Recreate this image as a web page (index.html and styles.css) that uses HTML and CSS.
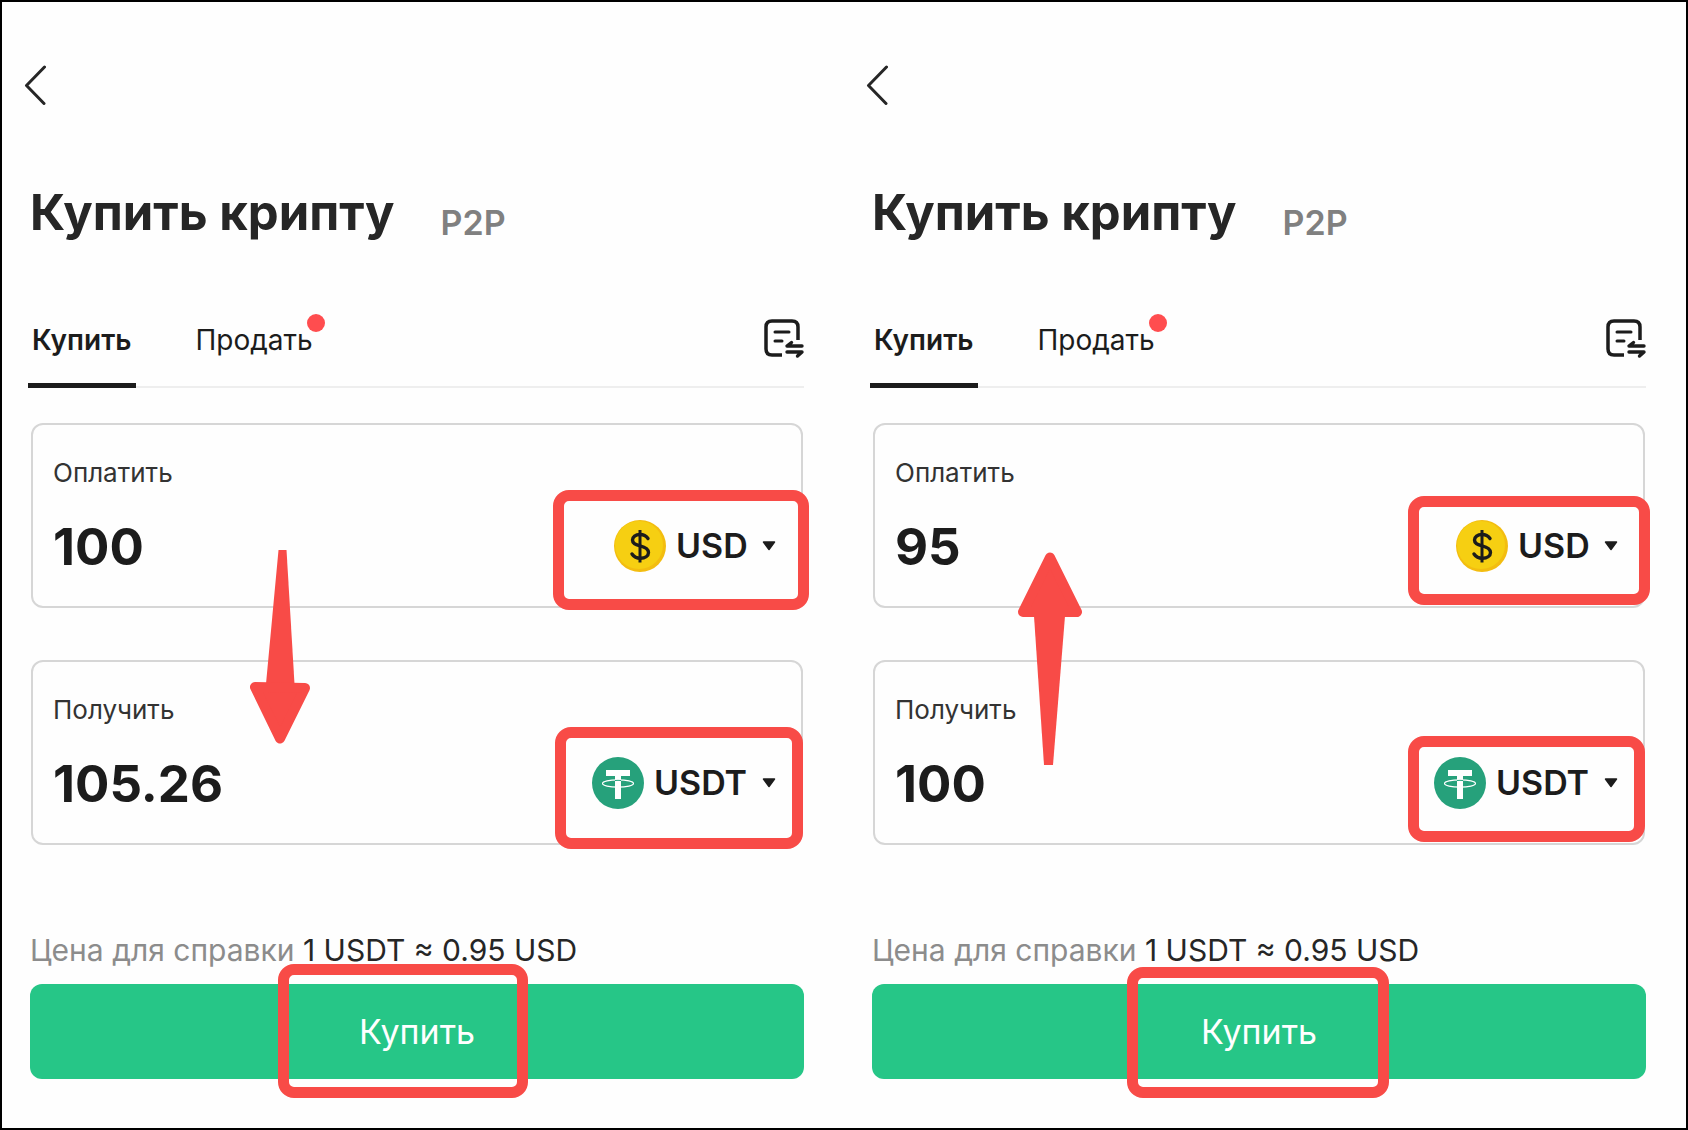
FILE: index.html
```html
<!DOCTYPE html>
<html lang="ru">
<head>
    <meta charset="UTF-8">
    <title>Купить крипту</title>
    <meta name="viewport" content="width=device-width, initial-scale=1.0">
    <link rel="stylesheet" href="styles.css">
</head>
<body>
    <!-- shared icons -->
    <svg class="sprite" aria-hidden="true">
        <symbol id="icon-back" viewBox="0 0 22 40">
            <path d="M20.5 2 L2.5 20.5 L20 38.5" fill="none" stroke="#262626" stroke-width="3" stroke-linecap="round" stroke-linejoin="round"/>
        </symbol>
        <symbol id="icon-orders" viewBox="0 0 42 42">
            <g fill="none" stroke="#1c1c1c" stroke-width="3" stroke-linecap="round" stroke-linejoin="round">
                <path d="M36 22 V9 Q36 3 30 3 H10 Q4 3 4 9 V31 Q4 37 10 37 H20" stroke-linecap="butt" stroke-width="3.500"/>
                <path d="M13 14 H27 M13 23 H20"/>
                <path d="M40 28 H25 L29.500 24.500" stroke-width="3.400"/>
                <path d="M25 34 H40 L35.500 38" stroke-width="3.400"/>
            </g>
        </symbol>
        <symbol id="coin-usd" viewBox="0 0 52 52">
            <circle cx="26" cy="26" r="26" fill="#f3bd10"/>
            <circle cx="25" cy="25" r="24" fill="#f6cf12"/>
            <g fill="none" stroke="#1c1c1c" stroke-linecap="round">
                <path d="M34 18.5 C32 15.500 29 14.500 26 14.500 C21.500 14.500 18.500 17 18.500 20 C18.500 23.500 21.500 24.800 26 25.800 C31 27 34.500 28.600 34.500 32.500 C34.500 36 31 38.300 26.500 38.300 C23 38.300 20 37 18 34" stroke-width="3.400"/>
                <path d="M26 10 V42.500" stroke-width="3" stroke-linecap="butt"/>
            </g>
        </symbol>
        <symbol id="coin-usdt" viewBox="0 0 52 52">
            <circle cx="26" cy="26" r="26" fill="#26a17b"/>
            <path d="M14 13 H38 V19 H29 V42 H23 V19 H14 Z" fill="#fff"/>
            <ellipse cx="26" cy="26.500" rx="15.500" ry="3.600" fill="none" stroke="#fff" stroke-width="1.200"/>
            <path d="M23 23.500 Q26 23.200 29 23.500" fill="none" stroke="#26a17b" stroke-width="1"/>
        </symbol>
        <symbol id="icon-caret" viewBox="0 0 14 10">
            <path d="M1.500 1 H12.500 L7 8.500 Z" fill="#1c1c1c" stroke="#1c1c1c" stroke-width="1.500" stroke-linejoin="round"/>
        </symbol>
    </svg>

    <main class="frame">
        <section class="screen screen-pay">
            <button class="back" aria-label="Назад"><svg><use href="#icon-back"/></svg></button>
            <header class="heading">
                <h1>Купить крипту</h1>
                <a class="p2p" href="#">P2P</a>
            </header>
            <nav class="tabs">
                <a class="tab active" href="#">Купить</a>
                <a class="tab" href="#">Продать<span class="dot"></span></a>
                <button class="orders" aria-label="Ордера"><svg><use href="#icon-orders"/></svg></button>
            </nav>
            <form class="form">
                <div class="card">
                    <label for="pay1">Оплатить</label>
                    <div class="row">
                        <input class="amount" type="text" id="pay1" value="100">
                        <div class="picker">
                            <svg class="coin"><use href="#coin-usd"/></svg>
                            <select aria-label="Валюта"><option>USD</option></select>
                            <svg class="caret"><use href="#icon-caret"/></svg>
                        </div>
                    </div>
                    <span class="mark mark-currency"></span>
                </div>
                <div class="card">
                    <label for="get1">Получить</label>
                    <div class="row">
                        <input class="amount" type="text" id="get1" value="105.26">
                        <div class="picker">
                            <svg class="coin"><use href="#coin-usdt"/></svg>
                            <select aria-label="Криптовалюта"><option>USDT</option></select>
                            <svg class="caret"><use href="#icon-caret"/></svg>
                        </div>
                    </div>
                    <span class="mark mark-crypto"></span>
                </div>
                <svg class="arrow" viewBox="0 0 60 194" aria-hidden="true">
                    <path d="M28.500 0 H36.500 L44.500 134 H16 Z"/>
                    <path d="M5 137 L55 138 L30 188.500 Z" stroke-width="10" stroke-linejoin="round"/>
                </svg>
            </form>
            <p class="price">Цена для справки <span>1 USDT ≈ 0.95 USD</span></p>
            <div class="submit">
                <button class="buy">Купить</button>
                <span class="mark mark-buy"></span>
            </div>
        </section>

        <section class="screen screen-get">
            <button class="back" aria-label="Назад"><svg><use href="#icon-back"/></svg></button>
            <header class="heading">
                <h1>Купить крипту</h1>
                <a class="p2p" href="#">P2P</a>
            </header>
            <nav class="tabs">
                <a class="tab active" href="#">Купить</a>
                <a class="tab" href="#">Продать<span class="dot"></span></a>
                <button class="orders" aria-label="Ордера"><svg><use href="#icon-orders"/></svg></button>
            </nav>
            <form class="form">
                <div class="card">
                    <label for="pay2">Оплатить</label>
                    <div class="row">
                        <input class="amount" type="text" id="pay2" value="95">
                        <div class="picker">
                            <svg class="coin"><use href="#coin-usd"/></svg>
                            <select aria-label="Валюта"><option>USD</option></select>
                            <svg class="caret"><use href="#icon-caret"/></svg>
                        </div>
                    </div>
                    <span class="mark mark-currency"></span>
                </div>
                <div class="card">
                    <label for="get2">Получить</label>
                    <div class="row">
                        <input class="amount" type="text" id="get2" value="100">
                        <div class="picker">
                            <svg class="coin"><use href="#coin-usdt"/></svg>
                            <select aria-label="Криптовалюта"><option>USDT</option></select>
                            <svg class="caret"><use href="#icon-caret"/></svg>
                        </div>
                    </div>
                    <span class="mark mark-crypto"></span>
                </div>
                <svg class="arrow" viewBox="0 0 66 213" aria-hidden="true">
                    <path d="M17 64 H48 L36 213 H27 Z"/>
                    <path d="M33 5.500 L60 60 L6 60 Z" stroke-width="10" stroke-linejoin="round"/>
                </svg>
            </form>
            <p class="price">Цена для справки <span>1 USDT ≈ 0.95 USD</span></p>
            <div class="submit">
                <button class="buy">Купить</button>
                <span class="mark mark-buy"></span>
            </div>
        </section>
    </main>
</body>
</html>
```
FILE: styles.css
```css
* {
    box-sizing: border-box;
}
body {
    margin: 0;
    background: #fff;
    color: #1c1c1c;
    font-family: Inter, "Noto Sans", sans-serif;
}
button, input, select {
    font-family: inherit;
    color: inherit;
    background: none;
    border: none;
    padding: 0;
    margin: 0;
}
button {
    cursor: pointer;
}
a {
    color: inherit;
    text-decoration: none;
}
svg {
    display: block;
}
.sprite {
    position: absolute;
    width: 0;
    height: 0;
}
.frame {
    display: grid;
    grid-template-columns: repeat(2, minmax(0, 1fr));
    min-height: 100vh;
    border: 2px solid #000;
    background: #fefefe;
}
.screen {
    padding: 63px 40px 46px 28px;
}
.back {
    display: block;
    margin-left: -6px;
}
.back svg {
    width: 22px;
    height: 40px;
}

/* heading and tabs */
.heading {
    display: flex;
    align-items: flex-end;
    gap: 46px;
    margin-top: 78px;
}
.heading h1 {
    margin: 0;
    font-size: 49px;
    line-height: 60px;
    font-weight: 700;
    color: #262626;
}
.p2p {
    font-size: 34px;
    line-height: 40px;
    font-weight: 600;
    color: #808080;
}
.tabs {
    display: flex;
    align-items: flex-start;
    margin-top: 79px;
    margin-left: -2px;
    box-shadow: inset 0 -2px #eee;
    font-size: 28px;
    line-height: 36px;
}
.tab {
    position: relative;
    padding: 0 4px 25px;
    border-bottom: 5px solid transparent;
}
.tab.active {
    font-weight: 600;
    border-color: #1c1c1c;
    margin-right: 56px;
}
.dot {
    position: absolute;
    top: -8px;
    right: -8px;
    width: 18px;
    height: 18px;
    border-radius: 50%;
    background: #ff4d4f;
}
.orders {
    margin-left: auto;
    margin-top: -4px;
}
.orders svg {
    width: 42px;
    height: 42px;
}

/* amounts */
.form {
    position: relative;
    display: flex;
    flex-direction: column;
    gap: 52px;
    margin: 35px 1px 0;
}
.card {
    position: relative;
    padding: 32px 25px 30px 20px;
    border: 2px solid #d6d6d6;
    border-radius: 12px;
}
.card label {
    display: block;
    font-size: 26px;
    line-height: 32px;
    color: #333;
}
.row {
    display: flex;
    align-items: center;
    justify-content: space-between;
    margin-top: 27px;
}
.amount {
    flex: 1;
    width: 0;
    min-width: 0;
    height: 60px;
    font-size: 51px;
    font-weight: 700;
    outline: none;
}
.picker {
    display: flex;
    align-items: center;
}
.coin {
    width: 52px;
    height: 52px;
}
.picker select {
    appearance: none;
    margin-left: 10px;
    margin-right: 14px;
    font-size: 34px;
    line-height: 40px;
    font-weight: 600;
}
.caret {
    width: 14px;
    height: 10px;
}

/* price and button */
.price {
    margin: 85px 0 14px;
    font-size: 30px;
    line-height: 40px;
    color: #8c8c8c;
}
.price span {
    color: #262626;
}
.submit {
    position: relative;
}
.buy {
    display: block;
    width: 100%;
    height: 95px;
    border-radius: 12px;
    background: #26c687;
    color: #fff;
    font-size: 34px;
}

/* red highlights drawn over the screens */
.mark {
    position: absolute;
    border: 11px solid #f84b47;
    border-radius: 16px;
    pointer-events: none;
}
.arrow {
    position: absolute;
    fill: #f84b47;
    stroke: #f84b47;
    stroke-width: 0;
    pointer-events: none;
}
.screen-pay .mark-currency {
    top: 65px;
    right: -8px;
    width: 256px;
    height: 120px;
}
.screen-pay .mark-crypto {
    top: 65px;
    right: -2px;
    width: 248px;
    height: 122px;
}
.screen-pay .mark-buy {
    top: -20px;
    left: 248px;
    width: 250px;
    height: 134px;
}
.screen-pay .arrow {
    top: 127px;
    left: 219px;
    width: 60px;
    height: 194px;
}
.screen-get .mark-currency {
    top: 71px;
    right: -7px;
    width: 242px;
    height: 109px;
}
.screen-get .mark-crypto {
    top: 74px;
    right: -2px;
    width: 237px;
    height: 106px;
}
.screen-get .mark-buy {
    top: -17px;
    left: 255px;
    width: 262px;
    height: 131px;
}
.screen-get .arrow {
    top: 129px;
    left: 144px;
    width: 66px;
    height: 213px;
}
@media (max-width: 1100px) {
    .frame {
        grid-template-columns: minmax(0, 1fr);
    }
}
```
